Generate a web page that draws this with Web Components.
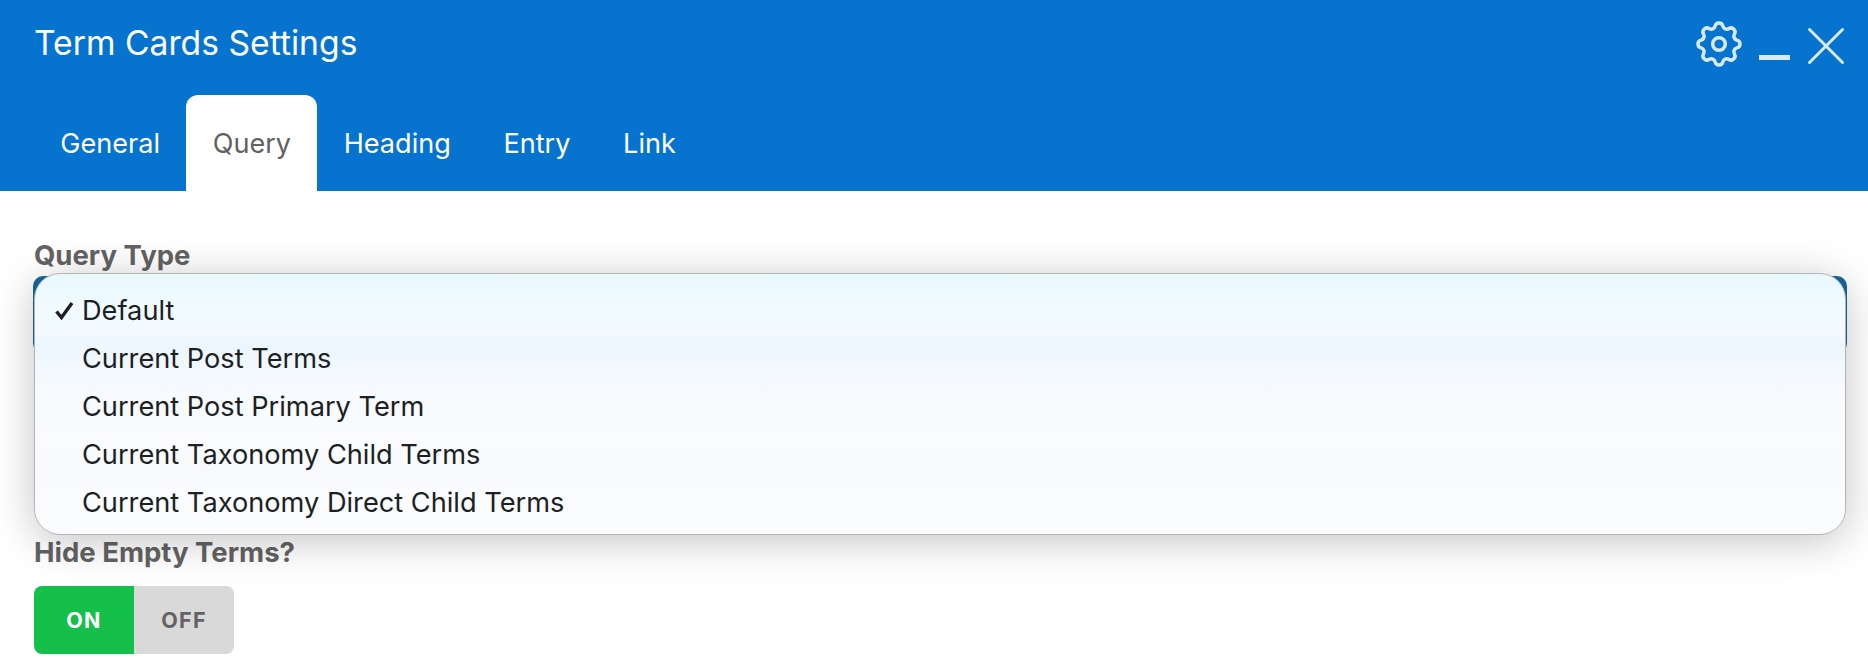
<!doctype html>
<html lang="en">
<head>
<meta charset="utf-8">
<title>Term Cards Settings</title>
<style>
  html, body { margin: 0; height: 100%; background: #fff; overflow: hidden; }
  body { font-family: Inter, 'Liberation Sans', sans-serif; }
</style>
</head>
<body>
<settings-panel heading="Term Cards Settings">
  <panel-tab slot="tabs">General</panel-tab>
  <panel-tab slot="tabs" active>Query</panel-tab>
  <panel-tab slot="tabs">Heading</panel-tab>
  <panel-tab slot="tabs">Entry</panel-tab>
  <panel-tab slot="tabs">Link</panel-tab>

  <form-field label="Query Type" gap="5">
    <select-box>
      <select-menu>
        <menu-option checked>Default</menu-option>
        <menu-option>Current Post Terms</menu-option>
        <menu-option>Current Post Primary Term</menu-option>
        <menu-option>Current Taxonomy Child Terms</menu-option>
        <menu-option>Current Taxonomy Direct Child Terms</menu-option>
      </select-menu>
    </select-box>
  </form-field>

  <form-field label="Hide Empty Terms?" gap="18" style="margin-top:183px">
    <on-off-toggle></on-off-toggle>
  </form-field>
</settings-panel>

<script>
class SettingsPanel extends HTMLElement {
  constructor () {
    super()
    this.shadow = this.attachShadow({ mode: 'open' })
  }

  connectedCallback () {
    this.shadow.innerHTML =
    /*html*/`
    <style>
      :host{
        display: block;
      }

      header{
        background: #0673cf;
        color: #fff;
        display: flex;
        flex-direction: column;
        height: 191px;
        justify-content: space-between;
      }

      .top{
        align-items: flex-start;
        display: flex;
        justify-content: space-between;
        padding: 23px 22px 0 34px;
      }

      h1{
        font-size: 33.7px;
        font-weight: 400;
        line-height: 40px;
        margin: 0;
      }

      .actions{
        align-items: flex-start;
        display: flex;
        gap: 12px;
        margin-top: -7px;
      }

      svg{
        display: block;
        fill: none;
        stroke: #d8eaf8;
      }

      svg:last-child{
        margin-left: 4px;
      }

      .tabs{
        display: flex;
        padding-left: 34px;
      }

      .body{
        padding: 48px 34px 0;
      }
    </style>

    <header>
      <div class="top">
        <h1>${this.getAttribute('heading')}</h1>
        <div class="actions">
          <svg width="56" height="56" viewBox="0 0 24 24" stroke-width="1.5" stroke-linecap="round" stroke-linejoin="round">
            <path d="M10.325 4.317c.426-1.756 2.924-1.756 3.35 0a1.724 1.724 0 002.573 1.066c1.543-.94 3.31.826 2.37 2.37a1.724 1.724 0 001.065 2.572c1.756.426 1.756 2.924 0 3.35a1.724 1.724 0 00-1.066 2.573c.94 1.543-.826 3.31-2.37 2.37a1.724 1.724 0 00-2.572 1.065c-.426 1.756-2.924 1.756-3.35 0a1.724 1.724 0 00-2.573-1.066c-1.543.94-3.31-.826-2.37-2.37a1.724 1.724 0 00-1.065-2.572c-1.756-.426-1.756-2.924 0-3.35a1.724 1.724 0 001.066-2.573c-.94-1.543.826-3.31 2.37-2.37.996.608 2.296.07 2.572-1.065z"/>
            <circle cx="12" cy="12" r="2.7"/>
          </svg>
          <svg width="31" height="56" viewBox="0 0 31 56" stroke-width="5">
            <path d="M0 41.5h31"/>
          </svg>
          <svg width="40" height="56" viewBox="0 0 40 56" stroke-width="3" stroke-linecap="round">
            <path d="M3.5 13.5l33 33M36.5 13.5l-33 33"/>
          </svg>
        </div>
      </div>
      <nav class="tabs"><slot name="tabs"></slot></nav>
    </header>
    <div class="body"><slot></slot></div>
    `
  }
}

class PanelTab extends HTMLElement {
  constructor () {
    super()
    this.shadow = this.attachShadow({ mode: 'open' })
    this.shadow.innerHTML =
    /*html*/`
    <style>
      :host{
        align-items: center;
        border-radius: 12px 12px 0 0;
        color: #fff;
        display: flex;
        font-size: 27.1px;
        height: 96px;
        padding: 0 26.3px;
      }

      :host([active]){
        background: #fff;
        color: #626262;
      }
    </style>
    <slot></slot>
    `
  }
}

class FormField extends HTMLElement {
  constructor () {
    super()
    this.shadow = this.attachShadow({ mode: 'open' })
  }

  connectedCallback () {
    this.shadow.innerHTML =
    /*html*/`
    <style>
      :host{
        display: block;
      }

      label{
        color: #636363;
        display: block;
        font-size: 27.5px;
        font-weight: 700;
        line-height: 32px;
        margin-bottom: ${this.getAttribute('gap')}px;
      }
    </style>
    <label>${this.getAttribute('label')}</label>
    <slot></slot>
    `
  }
}

class SelectBox extends HTMLElement {
  constructor () {
    super()
    this.shadow = this.attachShadow({ mode: 'open' })
    this.shadow.innerHTML =
    /*html*/`
    <style>
      :host{
        background: #17689f;
        border-radius: 10px;
        display: block;
        height: 77px;
        margin: 0 -13px 0 -1px;
        position: relative;
      }
    </style>
    <slot></slot>
    `
  }
}

class SelectMenu extends HTMLElement {
  constructor () {
    super()
    this.shadow = this.attachShadow({ mode: 'open' })
    this.shadow.innerHTML =
    /*html*/`
    <style>
      :host{
        background: linear-gradient(#e8f8ff 0, #f0faff 12%, #f2faff 22%, #ecf6fe 28%, #f1f8fe 34%, #f7fafe 46%, #f9fbfd 65%, #f8f9fb 74%, #fafbfc 84%, #fafbfc 100%);
        border: 1px solid #b4b4b4;
        border-radius: 26px;
        box-shadow: 0 6px 42px rgba(0, 0, 0, .24);
        box-sizing: border-box;
        display: block;
        height: 262px;
        left: 1px;
        padding: 12px 0;
        position: absolute;
        right: 1px;
        top: -3px;
      }
    </style>
    <slot></slot>
    `
  }
}

class MenuOption extends HTMLElement {
  constructor () {
    super()
    this.shadow = this.attachShadow({ mode: 'open' })
    this.shadow.innerHTML =
    /*html*/`
    <style>
      :host{
        align-items: center;
        color: #1c1f24;
        display: flex;
        font-size: 27.2px;
        height: 48px;
        padding-left: 47px;
        position: relative;
      }

      svg{
        display: none;
        fill: none;
        left: 20px;
        position: absolute;
        stroke: #1c1f24;
        top: 15px;
      }

      :host([checked]) svg{
        display: block;
      }
    </style>
    <svg width="19" height="19" viewBox="0 0 19 19" stroke-width="3.4">
      <path d="M1.5 10.5l5 6L17 2"/>
    </svg>
    <slot></slot>
    `
  }
}

class OnOffToggle extends HTMLElement {
  constructor () {
    super()
    this.shadow = this.attachShadow({ mode: 'open' })
    this.shadow.innerHTML =
    /*html*/`
    <style>
      :host{
        border-radius: 8px;
        display: inline-grid;
        font-size: 21.5px;
        font-weight: 700;
        grid-template-columns: 100px 100px;
        height: 68px;
        letter-spacing: 1.3px;
        overflow: hidden;
      }

      span{
        align-items: center;
        display: flex;
        justify-content: center;
      }

      .on{
        background: #14c04a;
        color: #fff;
      }

      .off{
        background: #d9d9d9;
        color: #636363;
      }
    </style>
    <span class="on">ON</span>
    <span class="off">OFF</span>
    `
  }
}

customElements.define('settings-panel', SettingsPanel)
customElements.define('panel-tab', PanelTab)
customElements.define('form-field', FormField)
customElements.define('select-box', SelectBox)
customElements.define('select-menu', SelectMenu)
customElements.define('menu-option', MenuOption)
customElements.define('on-off-toggle', OnOffToggle)
</script>
</body>
</html>
